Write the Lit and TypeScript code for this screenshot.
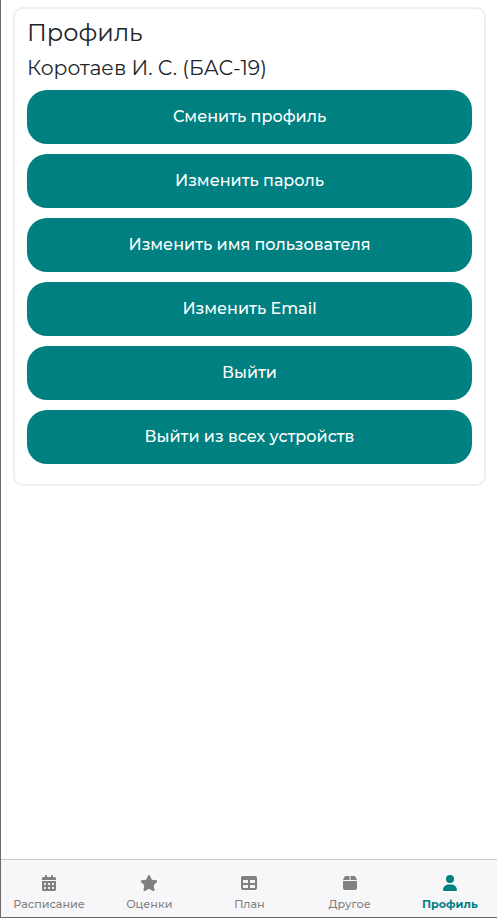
import { LitElement, html, css, svg } from "lit";
import { customElement } from "lit/decorators.js";
import { classMap } from "lit/directives/class-map.js";

const actions = [
  "Сменить профиль",
  "Изменить пароль",
  "Изменить имя пользователя",
  "Изменить Email",
  "Выйти",
  "Выйти из всех устройств",
];

const tabs = [
  {
    label: "Расписание",
    size: 448,
    icon: svg`<path fill-rule="evenodd" d="M128 0c17.700 0 32 14.300 32 32V64H288V32c0-17.700 14.300-32 32-32s32 14.300 32 32V64h48c26.500 0 48 21.500 48 48v48H0V112C0 85.500 21.500 64 48 64H96V32c0-17.700 14.300-32 32-32zM0 192H448V464c0 26.500-21.500 48-48 48H48c-26.500 0-48-21.500-48-48V192zM64 272v32c0 8.800 7.200 16 16 16h32c8.800 0 16-7.200 16-16V272c0-8.800-7.200-16-16-16H80c-8.800 0-16 7.200-16 16zm128 0v32c0 8.800 7.200 16 16 16h32c8.800 0 16-7.200 16-16V272c0-8.800-7.200-16-16-16H208c-8.800 0-16 7.200-16 16zm144-16c-8.800 0-16 7.200-16 16v32c0 8.800 7.200 16 16 16h32c8.800 0 16-7.200 16-16V272c0-8.800-7.200-16-16-16H336zM64 400v32c0 8.800 7.200 16 16 16h32c8.800 0 16-7.200 16-16V400c0-8.800-7.200-16-16-16H80c-8.800 0-16 7.200-16 16zm144-16c-8.800 0-16 7.200-16 16v32c0 8.800 7.200 16 16 16h32c8.800 0 16-7.200 16-16V400c0-8.800-7.200-16-16-16H208zm112 16v32c0 8.800 7.200 16 16 16h32c8.800 0 16-7.200 16-16V400c0-8.800-7.200-16-16-16H336c-8.800 0-16 7.200-16 16z"/>`,
  },
  {
    label: "Оценки",
    size: 576,
    icon: svg`<path d="M316.900 18C311.600 7 300.400 0 288.100 0s-23.400 7-28.800 18L195 150.300 51.400 171.500c-12 1.800-22 10.200-25.700 21.700s-.7 24.200 7.900 32.700L137.800 329 113.200 474.700c-2 12 3 24.200 12.900 31.300s23 8 33.800 2.300l128.300-68.500 128.300 68.500c10.800 5.700 23.900 4.900 33.800-2.300s14.900-19.300 12.900-31.300L438.500 329 542.700 225.900c8.600-8.500 11.700-21.200 7.900-32.700s-13.700-19.900-25.700-21.700L381.200 150.300 316.900 18z"/>`,
  },
  {
    label: "План",
    size: 512,
    icon: svg`<path fill-rule="evenodd" d="M64 32H448c35.300 0 64 28.700 64 64V416c0 35.300-28.700 64-64 64H64c-35.300 0-64-28.700-64-64V96C0 60.700 28.700 32 64 32zM64 160v96H224V160H64zm224 0v96H448V160H288zM64 320v96H224V320H64zm224 0v96H448V320H288z"/>`,
  },
  {
    label: "Другое",
    size: 448,
    icon: svg`<path d="M50.700 58.500L0 160H208V32H93.700C75.500 32 58.900 42.300 50.700 58.500zM240 160H448L397.300 58.500C389.100 42.300 372.500 32 354.300 32H240V160zm208 32H0V416c0 35.300 28.700 64 64 64H384c35.300 0 64-28.700 64-64V192z"/>`,
  },
  {
    label: "Профиль",
    size: 448,
    active: true,
    icon: svg`<path d="M224 256A128 128 0 1 0 224 0a128 128 0 1 0 0 256zm-45.700 48C79.800 304 0 383.800 0 482.300C0 498.700 13.300 512 29.700 512H418.300c16.400 0 29.700-13.300 29.700-29.700C448 383.800 368.200 304 269.700 304H178.300z"/>`,
  },
];

@customElement("profile-card")
export class ProfileCard extends LitElement {
  static styles = css`
    :host {
      display: block;
      box-sizing: border-box;
      height: 479px;
      margin: 7px 11px 0 12px;
      padding: 9px 12px;
      border: 2px solid #eee;
      border-radius: 10px;
      color: #212529;
    }
    .title,
    .name {
      margin: 0;
      font-weight: 400;
      white-space: nowrap;
    }
    .title {
      height: 34px;
      font-size: 24px;
      line-height: 29px;
    }
    .name {
      height: 38px;
      font-size: 20.3px;
      line-height: 31px;
    }
    .actions {
      display: grid;
      gap: 10px;
    }
    .action {
      height: 54px;
      padding: 0 0 1px;
      border: 0;
      border-radius: 20px;
      background: #008080;
      color: #fff;
      font: 500 16px "Montserrat", "Inter", sans-serif;
    }
  `;

  render() {
    return html`
      <h1 class="title">Профиль</h1>
      <h2 class="name">Коротаев И. С. (БАС-19)</h2>
      <div class="actions">
        ${actions.map((label) => html`<button class="action">${label}</button>`)}
      </div>
    `;
  }
}

@customElement("tab-bar")
export class TabBar extends LitElement {
  static styles = css`
    :host {
      display: grid;
      grid-template-columns: repeat(5, 100.2px);
      box-sizing: border-box;
      height: 59px;
      padding-top: 15px;
      border-top: 1px solid #c8c7cc;
      border-bottom: 1px solid #6b6b6e;
      background: #f7f7fa;
      overflow: hidden;
    }
    .tab {
      display: flex;
      flex-direction: column;
      align-items: center;
      gap: 5px;
      margin-left: -4px;
      color: #808080;
      font-size: 11.2px;
      font-weight: 500;
      line-height: 16px;
      white-space: nowrap;
    }
    .active {
      color: #008080;
      font-weight: 700;
    }
    .icon {
      display: block;
      height: 16px;
      fill: currentColor;
    }
  `;

  render() {
    return tabs.map(
      (t) => html`<div class=${classMap({ tab: true, active: !!t.active })}>
        <svg class="icon" viewBox="0 0 ${t.size} 512">${t.icon}</svg>
        <span>${t.label}</span>
      </div>`
    );
  }
}

@customElement("app-root")
export class AppRoot extends LitElement {
  static styles = css`
    :host {
      display: flex;
      flex-direction: column;
      box-sizing: border-box;
      height: 100vh;
      border-left: 1px solid #6b6b6e;
      background: #fff;
      font-family: "Montserrat", "Inter", sans-serif;
      overflow: hidden;
    }
    .page {
      flex: 1;
      display: flow-root;
    }
  `;

  render() {
    return html`
      <main class="page"><profile-card></profile-card></main>
      <tab-bar></tab-bar>
    `;
  }
}
